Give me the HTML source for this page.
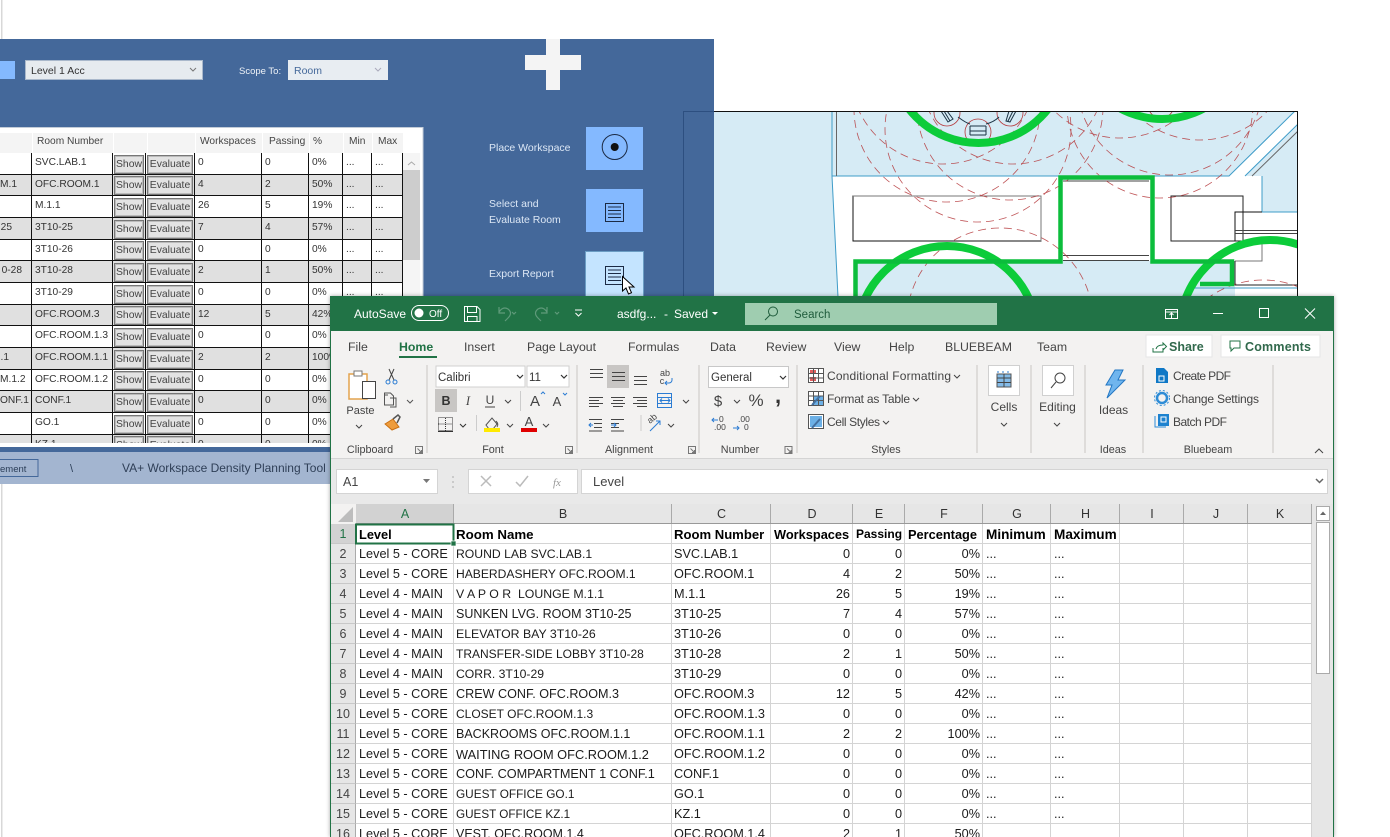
<!DOCTYPE html>
<html><head><meta charset="utf-8"><title>VA+ Workspace Density Planning Tool</title>
<style>
html,body{margin:0;padding:0;width:1390px;height:837px;overflow:hidden;background:#fff;font-family:"Liberation Sans",sans-serif}
svg{position:absolute;left:0;top:0}
svg text{font-family:"Liberation Sans",sans-serif}
table{border-collapse:separate;border-spacing:0;table-layout:fixed;position:absolute}
td{box-sizing:border-box;padding:0;white-space:nowrap;overflow:hidden}
#lt{left:0;top:153px;width:403px;font-size:10.2px;color:#333}
#lt td{border-right:1px solid #111;border-bottom:1px solid #111;padding-left:3px;padding-bottom:2px}
#lt td.r{text-align:right;padding-left:0}
#lt td.b{padding:0;text-align:center}
#lt tr.g td{background:#e0e0e0}
#lt tr.w td{background:#fff}
#lt tr.a td{height:22px}
#lt tr.c td{height:21px}
#lt td.b span{display:block;box-sizing:border-box;margin:1px 1px 0;height:19px;border:1px solid #777;outline:1px solid #bbb;outline-offset:-2px;background:#e3e3e3;line-height:18px;color:#444;font-size:10.4px}
#hd{position:absolute;left:0;top:133px;height:20px;font-size:10.2px;color:#444;background:#f4f4f4;width:403px}
#hd span{position:absolute;top:3px}
#hd i{position:absolute;top:0;height:20px;width:1px;background:#fff}
#xl{position:absolute;left:330px;top:296px;width:1004px;height:541px;background:#f3f2f1;box-shadow:0 0 4px rgba(0,0,0,.35);overflow:hidden}
#gd{left:1px;top:228px;width:981px;font-size:12.7px;color:#1c1c1c}
#gd td{height:20px;border-right:1px solid #d4d4d4;border-bottom:1px solid #d4d4d4;background:#fff;padding:2px 2px 0 3px;line-height:17px}
#gd td:nth-child(3),#gd td:nth-child(4){padding-left:2px}
#gd td.n{background:#e6e6e6;text-align:center;color:#444;padding:2px 0 0;border-right:1px solid #aaa;border-bottom:1px solid #c8c8c8;font-size:12.5px}
#gd td.s{background:#d2d2d2;color:#217346!important}
#gd td.r{text-align:right}
#gd tr.h td{font-weight:bold;color:#000;font-size:12.8px}
#ch{position:absolute;left:26px;top:208px;height:20px;width:956px;background:#e6e6e6;border-bottom:1px solid #999;box-sizing:border-box;font-size:12.5px;color:#333}
#ch span{position:absolute;top:0;height:19px;line-height:21px;text-align:center;border-right:1px solid #aaa;box-sizing:border-box;padding-left:1px}
</style></head><body>

<svg width="1390" height="837" viewBox="0 0 1390 837">
<rect x="1" y="0" width="1.5" height="837" fill="#d8d8d8"/>
<rect x="0" y="39" width="714" height="411" fill="#44689a"/>
<rect x="0" y="61" width="15" height="18" fill="#84b9ff"/>
<rect x="25.500" y="60.500" width="177" height="19" fill="#e6ebef" stroke="#a9b8cb"/>
<text x="31" y="74" font-size="10.500" fill="#333">Level 1 Acc</text>
<path d="M190 68l3 3 3-3" fill="none" stroke="#777"/>
<text x="239" y="74" font-size="9.500" fill="#eef2f7">Scope To:</text>
<rect x="288" y="60" width="100" height="20" fill="#e8edf2"/>
<text x="294" y="74" font-size="10.500" fill="#44689a">Room</text>
<path d="M375 68l3 3 3-3" fill="none" stroke="#aab"/>
<rect x="546" y="39" width="14" height="51" fill="#f4f4f4"/>
<rect x="525" y="55" width="56" height="15" fill="#f4f4f4"/>
<g font-size="10.500" fill="#dce7f5">
<text x="489" y="151">Place Workspace</text>
<text x="489" y="207">Select and</text>
<text x="489" y="223">Evaluate Room</text>
<text x="489" y="277">Export Report</text>
</g>
<rect x="586" y="127" width="57" height="43" fill="#84b9ff"/>
<circle cx="614.700" cy="147" r="12.500" fill="none" stroke="#1b2a44"/>
<circle cx="614.700" cy="147" r="4" fill="#111"/>
<rect x="586" y="189" width="57" height="43" fill="#84b9ff"/>
<g fill="none" stroke="#1b2a44">
<rect x="605.500" y="203.500" width="18" height="18"/>
<path d="M608 207h13M608 210.500h13M608 214h13M608 217.500h13"/>
</g>
<rect x="585.500" y="251.500" width="58" height="46" fill="#c4e4ff" stroke="#6b9dc4"/>
<g fill="none" stroke="#1b2a44">
<rect x="605.500" y="266.500" width="18" height="18"/>
<path d="M608 270h13M608 273.500h13M608 277h13M608 280.500h13"/>
</g>

<!-- plan -->
<path d="M683.500 297V111.500H714" fill="none" stroke="#2d4f80"/>
<rect x="714" y="111" width="584" height="186" fill="#d6ebf5"/>
<path d="M832 176H1229L1295 111H1298V124L1245 176H1262V212H1298V297H1235V261H855V297H838Z" fill="#fff"/>
<clipPath id="pc"><rect x="714" y="111" width="584" height="186"/></clipPath>
<g clip-path="url(#pc)">
<path d="M832 111V176M832 176H1229L1295 111M1245 176L1298 124M1262 176V212H1298M832 176L838 297" fill="none" stroke="#3f9cc8" stroke-width="1"/>
<path d="M836.500 111V176M1252 176L1298 131" fill="none" stroke="#666" stroke-width="1"/>
<path d="M853 241H1041V196H853Z" fill="none" stroke="#111"/>
<path d="M853 196H1041V241" fill="none" stroke="#777"/>
<path d="M1171 241V196H1243V241H1171Z" fill="none" stroke="#222"/>
<path d="M1235 241V212H1262" fill="none" stroke="#111"/>
<path d="M1235 230.500H1298M1235 233.500H1298" fill="none" stroke="#444"/>
<path d="M1262 240V261H1235" fill="none" stroke="#777"/>
<path d="M1235 261V285H1298" fill="none" stroke="#222"/>
<path d="M1193 288H1298" fill="none" stroke="#3f9cc8"/>
<path d="M1063 181H1149M1063 255.500H1149M1063 260.500H1149" fill="none" stroke="#444"/>
<g fill="none" stroke="#b5373a" stroke-width=".8" stroke-dasharray="8 5" opacity=".85">
<circle cx="943" cy="71" r="93"/><circle cx="1013" cy="71" r="93"/><circle cx="947" cy="109" r="93"/>
<circle cx="1010" cy="107" r="93"/><circle cx="978" cy="129" r="93"/><circle cx="1000" cy="321" r="93"/>
<circle cx="1160" cy="105" r="93"/><circle cx="1170" cy="82" r="93"/><circle cx="1120" cy="45" r="93"/>
<circle cx="1200" cy="47" r="93"/><circle cx="1263" cy="373" r="93"/>
</g>
<g fill="none" stroke="#b5373a" stroke-width=".8">
<circle cx="978" cy="132" r="13"/><circle cx="947" cy="113" r="13"/><circle cx="1010" cy="113" r="13"/><circle cx="1161" cy="105" r="13"/>
</g>
<g fill="none" stroke="#1b3344" stroke-width="1">
<path d="M970 126h16M970 131h16M970 135h16M970 126v9M986 126v9"/>
<path d="M941 111l7 11 5-3-6-8M944 111l6 10"/>
<path d="M1009 111l-3 10 4 1 6-11M1013 111l-5 10"/>
<path d="M958 117q8 6 12 7M986 124q8-2 13-7"/>
</g>
<g fill="none" stroke="#0ccc3a" stroke-width="8">
<circle cx="978.500" cy="55" r="88"/><circle cx="1162" cy="31" r="88"/>
<circle cx="947" cy="336" r="90"/><circle cx="1270" cy="330" r="90"/>
</g>
<path d="M855.500 297V261.500H1060.500V177.500H1152.500V261.500H1232V284H1200" fill="none" stroke="#0cbd3c" stroke-width="4.500"/>
</g>
<path d="M714 111.500H1297.500V297" fill="none" stroke="#111"/>
<path d="M622.500 276.500V291l3.500-3 2.500 6 3-1.300-2.500-5.700H634Z" fill="#fff" stroke="#000" stroke-width="1"/>

<!-- left table frame -->
<rect x="-2" y="127.500" width="425" height="320" fill="#fff" stroke="#c3ccd8"/>
<rect x="403" y="153" width="17" height="287" fill="#f5f5f5"/>
<rect x="403" y="170" width="17" height="90" fill="#cdcdcd"/>
<path d="M408 165l3.500-3 3.500 3" fill="none" stroke="#aaa"/>
<rect x="0" y="447" width="330" height="5" fill="#44689a"/>
<rect x="0" y="452" width="330" height="32" fill="#a3b5d0"/>
<rect x="-20" y="459.500" width="58" height="17" fill="#a3b5d0" stroke="#44689a"/>
<text x="0" y="472" font-size="9.500" fill="#2b3e58">ement</text>
<text x="70" y="472" font-size="11" fill="#2b3e58">\</text>
<text x="122" y="472" font-size="12" fill="#2f3f57">VA+ Workspace Density Planning Tool</text>
</svg>

<div id="hd">
<i style="left:32px"></i><i style="left:113px"></i><i style="left:147px"></i><i style="left:195px"></i><i style="left:262px"></i><i style="left:309px"></i><i style="left:343px"></i><i style="left:372px"></i>
<span style="left:37px">Room Number</span><span style="left:200px">Workspaces</span><span style="left:269px">Passing</span><span style="left:313px">%</span><span style="left:349px">Min</span><span style="left:378px">Max</span>
</div>

<div style="position:absolute;left:0;top:153px;width:403px;height:290px;overflow:hidden">
<table id="lt" style="top:0">
<colgroup><col style="width:32px"><col style="width:81px"><col style="width:33px"><col style="width:49px"><col style="width:67px"><col style="width:47px"><col style="width:34px"><col style="width:29px"><col style="width:31px"></colgroup>
<tr class="w a"><td></td><td>SVC.LAB.1</td><td class="b"><span>Show</span></td><td class="b"><span>Evaluate</span></td><td>0</td><td>0</td><td>0%</td><td>...</td><td>...</td></tr>
<tr class="g c"><td class="r" style="padding-right:16px">M.1</td><td>OFC.ROOM.1</td><td class="b"><span>Show</span></td><td class="b"><span>Evaluate</span></td><td>4</td><td>2</td><td>50%</td><td>...</td><td>...</td></tr>
<tr class="w a"><td></td><td>M.1.1</td><td class="b"><span>Show</span></td><td class="b"><span>Evaluate</span></td><td>26</td><td>5</td><td>19%</td><td>...</td><td>...</td></tr>
<tr class="g a"><td class="r" style="padding-right:19px">25</td><td>3T10-25</td><td class="b"><span>Show</span></td><td class="b"><span>Evaluate</span></td><td>7</td><td>4</td><td>57%</td><td>...</td><td>...</td></tr>
<tr class="w c"><td></td><td>3T10-26</td><td class="b"><span>Show</span></td><td class="b"><span>Evaluate</span></td><td>0</td><td>0</td><td>0%</td><td>...</td><td>...</td></tr>
<tr class="g a"><td class="r" style="padding-right:9px">0-28</td><td>3T10-28</td><td class="b"><span>Show</span></td><td class="b"><span>Evaluate</span></td><td>2</td><td>1</td><td>50%</td><td>...</td><td>...</td></tr>
<tr class="w a"><td></td><td>3T10-29</td><td class="b"><span>Show</span></td><td class="b"><span>Evaluate</span></td><td>0</td><td>0</td><td>0%</td><td>...</td><td>...</td></tr>
<tr class="g c"><td></td><td>OFC.ROOM.3</td><td class="b"><span>Show</span></td><td class="b"><span>Evaluate</span></td><td>12</td><td>5</td><td>42%</td><td>...</td><td>...</td></tr>
<tr class="w a"><td></td><td>OFC.ROOM.1.3</td><td class="b"><span>Show</span></td><td class="b"><span>Evaluate</span></td><td>0</td><td>0</td><td>0%</td><td>...</td><td>...</td></tr>
<tr class="g a"><td class="r" style="padding-right:22px">.1</td><td>OFC.ROOM.1.1</td><td class="b"><span>Show</span></td><td class="b"><span>Evaluate</span></td><td>2</td><td>2</td><td>100%</td><td>...</td><td>...</td></tr>
<tr class="w c"><td class="r" style="padding-right:6px">M.1.2</td><td>OFC.ROOM.1.2</td><td class="b"><span>Show</span></td><td class="b"><span>Evaluate</span></td><td>0</td><td>0</td><td>0%</td><td>...</td><td>...</td></tr>
<tr class="g a"><td class="r" style="padding-right:5px">ONF.1</td><td>CONF.1</td><td class="b"><span>Show</span></td><td class="b"><span>Evaluate</span></td><td>0</td><td>0</td><td>0%</td><td>...</td><td>...</td></tr>
<tr class="w a"><td></td><td>GO.1</td><td class="b"><span>Show</span></td><td class="b"><span>Evaluate</span></td><td>0</td><td>0</td><td>0%</td><td>...</td><td>...</td></tr>
<tr class="g c"><td></td><td>KZ.1</td><td class="b"><span>Show</span></td><td class="b"><span>Evaluate</span></td><td>0</td><td>0</td><td>0%</td><td>...</td><td>...</td></tr>
</table>
</div>

<div id="xl">
<div style="position:absolute;left:0;top:0;width:1004px;height:35px;background:#217346"></div>
<div style="position:absolute;left:0;top:162px;width:1004px;height:46px;background:#e9e9e9;border-top:1px solid #d4d4d4;box-sizing:border-box"></div>
<div id="ch">
<span style="left:0;width:98px;background:#d2d2d2;color:#217346">A</span><span style="left:98px;width:218px">B</span><span style="left:316px;width:99px">C</span><span style="left:415px;width:82px">D</span><span style="left:497px;width:52px">E</span><span style="left:549px;width:78px">F</span><span style="left:627px;width:68px">G</span><span style="left:695px;width:69px">H</span><span style="left:764px;width:64px">I</span><span style="left:828px;width:64px">J</span><span style="left:892px;width:64px">K</span>
</div>
<table id="gd">
<colgroup><col style="width:25px"><col style="width:98px"><col style="width:218px"><col style="width:99px"><col style="width:82px"><col style="width:52px"><col style="width:78px"><col style="width:68px"><col style="width:69px"><col style="width:64px"><col style="width:64px"><col style="width:64px"></colgroup>
<tr class="h"><td class="n s" style="font-weight:normal;font-size:12.5px">1</td><td>Level</td><td style="font-size:13.3px">Room Name</td><td style="font-size:13.1px">Room Number</td><td>Workspaces</td><td style="font-size:12px">Passing</td><td>Percentage</td><td style="font-size:13.6px">Minimum</td><td style="font-size:13.6px">Maximum</td><td></td><td></td><td></td></tr>
<tr><td class="n">2</td><td>Level 5 - CORE</td><td style="font-size:12.2px">ROUND LAB SVC.LAB.1</td><td>SVC.LAB.1</td><td class="r">0</td><td class="r">0</td><td class="r">0%</td><td>...</td><td>...</td><td></td><td></td><td></td></tr>
<tr><td class="n">3</td><td>Level 5 - CORE</td><td style="font-size:12.1px">HABERDASHERY OFC.ROOM.1</td><td>OFC.ROOM.1</td><td class="r">4</td><td class="r">2</td><td class="r">50%</td><td>...</td><td>...</td><td></td><td></td><td></td></tr>
<tr><td class="n">4</td><td>Level 4 - MAIN</td><td style="font-size:12.3px">V A P O R &nbsp;LOUNGE M.1.1</td><td>M.1.1</td><td class="r">26</td><td class="r">5</td><td class="r">19%</td><td>...</td><td>...</td><td></td><td></td><td></td></tr>
<tr><td class="n">5</td><td>Level 4 - MAIN</td><td style="font-size:12.5px">SUNKEN LVG. ROOM 3T10-25</td><td>3T10-25</td><td class="r">7</td><td class="r">4</td><td class="r">57%</td><td>...</td><td>...</td><td></td><td></td><td></td></tr>
<tr><td class="n">6</td><td>Level 4 - MAIN</td><td style="font-size:12.3px">ELEVATOR BAY 3T10-26</td><td>3T10-26</td><td class="r">0</td><td class="r">0</td><td class="r">0%</td><td>...</td><td>...</td><td></td><td></td><td></td></tr>
<tr><td class="n">7</td><td>Level 4 - MAIN</td><td style="font-size:12px">TRANSFER-SIDE LOBBY 3T10-28</td><td>3T10-28</td><td class="r">2</td><td class="r">1</td><td class="r">50%</td><td>...</td><td>...</td><td></td><td></td><td></td></tr>
<tr><td class="n">8</td><td>Level 4 - MAIN</td><td style="font-size:12.2px">CORR. 3T10-29</td><td>3T10-29</td><td class="r">0</td><td class="r">0</td><td class="r">0%</td><td>...</td><td>...</td><td></td><td></td><td></td></tr>
<tr><td class="n">9</td><td>Level 5 - CORE</td><td style="font-size:12.6px">CREW CONF. OFC.ROOM.3</td><td>OFC.ROOM.3</td><td class="r">12</td><td class="r">5</td><td class="r">42%</td><td>...</td><td>...</td><td></td><td></td><td></td></tr>
<tr><td class="n">10</td><td>Level 5 - CORE</td><td style="font-size:12px">CLOSET OFC.ROOM.1.3</td><td>OFC.ROOM.1.3</td><td class="r">0</td><td class="r">0</td><td class="r">0%</td><td>...</td><td>...</td><td></td><td></td><td></td></tr>
<tr><td class="n">11</td><td>Level 5 - CORE</td><td style="font-size:12.5px">BACKROOMS OFC.ROOM.1.1</td><td>OFC.ROOM.1.1</td><td class="r">2</td><td class="r">2</td><td class="r">100%</td><td>...</td><td>...</td><td></td><td></td><td></td></tr>
<tr><td class="n">12</td><td>Level 5 - CORE</td><td style="font-size:12.8px">WAITING ROOM OFC.ROOM.1.2</td><td>OFC.ROOM.1.2</td><td class="r">0</td><td class="r">0</td><td class="r">0%</td><td>...</td><td>...</td><td></td><td></td><td></td></tr>
<tr><td class="n">13</td><td>Level 5 - CORE</td><td style="font-size:12.7px">CONF. COMPARTMENT 1 CONF.1</td><td>CONF.1</td><td class="r">0</td><td class="r">0</td><td class="r">0%</td><td>...</td><td>...</td><td></td><td></td><td></td></tr>
<tr><td class="n">14</td><td>Level 5 - CORE</td><td style="font-size:11.8px">GUEST OFFICE GO.1</td><td>GO.1</td><td class="r">0</td><td class="r">0</td><td class="r">0%</td><td>...</td><td>...</td><td></td><td></td><td></td></tr>
<tr><td class="n">15</td><td>Level 5 - CORE</td><td style="font-size:11.7px">GUEST OFFICE KZ.1</td><td>KZ.1</td><td class="r">0</td><td class="r">0</td><td class="r">0%</td><td>...</td><td>...</td><td></td><td></td><td></td></tr>
<tr><td class="n">16</td><td>Level 5 - CORE</td><td style="font-size:12.5px">VEST. OFC.ROOM.1.4</td><td>OFC.ROOM.1.4</td><td class="r">2</td><td class="r">1</td><td class="r">50%</td><td></td><td></td><td></td><td></td><td></td></tr>
</table>
<div style="position:absolute;left:0;top:0;width:1px;height:541px;background:#217346"></div>
<div style="position:absolute;right:0;top:0;width:1px;height:541px;background:#217346"></div>
</div>

<svg width="1390" height="837" viewBox="0 0 1390 837">
<!-- title bar -->
<text x="354" y="318" font-size="12" fill="#fff">AutoSave</text>
<rect x="411.500" y="305.500" width="37" height="15" rx="7.500" fill="none" stroke="#fff"/>
<circle cx="419" cy="313" r="4.500" fill="#fff"/>
<text x="429" y="317" font-size="10" fill="#fff">Off</text>
<g fill="none" stroke="#fff">
<path d="M464.500 306.500H477L480 309.500V321.500H464.500Z"/>
<path d="M467.500 306.500V312.500H476.500V306.500M467.500 321.500V316.500H477V321.500"/>
</g>
<g fill="none" stroke="#5f9a7a" stroke-width="1.200">
<path d="M499 307V313H505M499 312q4-6 9-3q5 4 0 9l-3 3"/>
<path d="M512 312l2 2 2-2"/>
<path d="M547 307V313H541M547 312q-4-6-9-3q-5 4 0 9l3 3"/>
<path d="M555 312l2 2 2-2"/>
</g>
<path d="M575 310h7M575.500 313l3 3 3-3" fill="none" stroke="#fff"/>
<text x="617" y="318" font-size="12" fill="#fff">asdfg...</text>
<text x="664" y="318" font-size="12" fill="#fff">-</text>
<text x="674" y="318" font-size="12" fill="#fff">Saved</text>
<path d="M712 312h6l-3 3z" fill="#fff"/>
<rect x="745" y="303" width="252" height="22" fill="#9fcdb0"/>
<circle cx="773" cy="311.500" r="4.500" fill="none" stroke="#1f5c3c"/>
<path d="M770 315l-5 5" stroke="#1f5c3c" fill="none"/>
<text x="794" y="318" font-size="11.500" fill="#1f5c3c">Search</text>
<g fill="none" stroke="#fff">
<rect x="1165.500" y="309.500" width="12" height="9"/><path d="M1165.500 312H1177.500M1171.500 318V313.500M1169.500 315l2-2 2 2"/>
<path d="M1213 313.500H1223"/>
<rect x="1259.500" y="308.500" width="9" height="9"/>
<path d="M1305 308.500l10 10M1315 308.500l-10 10"/>
</g>
<!-- tabs -->
<g font-size="12.300" fill="#444">
<text x="348" y="351">File</text>
<text x="399" y="351" font-weight="bold" fill="#217346">Home</text>
<text x="464" y="351">Insert</text>
<text x="527" y="351">Page Layout</text>
<text x="628" y="351">Formulas</text>
<text x="710" y="351">Data</text>
<text x="766" y="351">Review</text>
<text x="834" y="351">View</text>
<text x="889" y="351">Help</text>
<text x="945" y="351">BLUEBEAM</text>
<text x="1037" y="351">Team</text>
</g>
<rect x="399" y="356" width="38" height="2" fill="#217346"/>
<rect x="1146" y="335" width="66" height="22" fill="#fff" stroke="#e6e6e6"/>
<rect x="1221" y="335" width="99" height="22" fill="#fff" stroke="#e6e6e6"/>
<path d="M1153 348v4h10v-3M1156 349q1-4 7-4v-2l3.500 3.500-3.500 3.500v-2" fill="none" stroke="#217346"/>
<text x="1169" y="351" font-size="12.500" font-weight="bold" fill="#31694c">Share</text>
<path d="M1230 341h10v7h-6l-3 3v-3h-1z" fill="none" stroke="#217346"/>
<text x="1245" y="351" font-size="12.500" font-weight="bold" fill="#31694c" textLength="66">Comments</text>
<!-- separators -->
<path d="M427 365V453M577 365V453M699 365V453M797 365V453M977 365V453M1031 365V453M1085 365V453M1143 365V453M1273 365V453" stroke="#c8c6c4" fill="none"/>
<path d="M331 458.500H1333" stroke="#d4d4d4" fill="none"/>
<g font-size="10.800" fill="#444" text-anchor="middle">
<text x="370" y="453">Clipboard</text>
<text x="493" y="453">Font</text>
<text x="629" y="453">Alignment</text>
<text x="740" y="453">Number</text>
<text x="886" y="453">Styles</text>
<text x="1113" y="453">Ideas</text>
<text x="1208" y="453">Bluebeam</text>
</g>
<g fill="none" stroke="#777">
<path d="M415.500 446.500h7v7h-7zM417.500 448.500l4 4M419 452.500h2.500V450"/>
<path d="M565.500 446.500h7v7h-7zM567.500 448.500l4 4M569 452.500h2.500V450"/>
<path d="M688.500 446.500h7v7h-7zM690.500 448.500l4 4M692 452.500h2.500V450"/>
<path d="M785.500 446.500h7v7h-7zM787.500 448.500l4 4M789 452.500h2.500V450" transform="translate(-.5 0)"/>
<path d="M1315 453l4-4 4 4" stroke="#444"/>
</g>
<!-- clipboard -->
<path d="M349 374h18v25h-18z" fill="#fff" stroke="#e3a34e" stroke-width="1.500"/>
<rect x="354" y="371" width="8" height="5" fill="#fff" stroke="#777"/>
<rect x="362.500" y="381.500" width="13" height="17" fill="#fff" stroke="#444"/>
<text x="360.500" y="414" font-size="11" fill="#444" text-anchor="middle">Paste</text>
<path d="M356 425l3 3 3-3" fill="none" stroke="#444"/>
<g fill="none" stroke="#444"><path d="M389 369l5 11M394 369l-5 11"/><circle cx="388" cy="382" r="2" stroke="#2b7cd3"/><circle cx="395" cy="382" r="2" stroke="#2b7cd3"/></g>
<g fill="none" stroke="#555"><path d="M384.500 393h6l3 3v9h-9zM388 395h-3.500"/><path d="M390 398h6v9h-6" stroke="#555"/><path d="M407 400l3 3 3-3"/></g>
<path d="M385 424l8-5 6 8-7 3z" fill="#ee9c3c" stroke="#c96f12"/><path d="M393 419l5-4 2 2-3 6" fill="none" stroke="#555" stroke-width="1.500"/>
<!-- font -->
<rect x="436" y="366" width="89" height="21" fill="#fff" stroke="#d0d0d0"/>
<rect x="527" y="366" width="42" height="21" fill="#fff" stroke="#d0d0d0"/>
<text x="438" y="381" font-size="11.500" fill="#333">Calibri</text>
<text x="529" y="381" font-size="11.500" fill="#333">11</text>
<path d="M517 375l3 3 3-3M561 375l3 3 3-3" fill="none" stroke="#333" stroke-width="1.200"/>
<rect x="435" y="389" width="22" height="23" fill="#c8c6c4"/>
<text x="446" y="405" font-size="12.500" font-weight="bold" fill="#333" text-anchor="middle">B</text>
<text x="468" y="405" font-size="12.500" font-style="italic" style="font-family:'Liberation Serif',serif" fill="#444" text-anchor="middle">I</text>
<text x="490" y="404" font-size="12" fill="#444" text-anchor="middle">U</text><path d="M485 407h10" stroke="#444"/>
<path d="M505 400l3 3 3-3" fill="none" stroke="#444"/>
<path d="M520.500 391V411" stroke="#ccc"/>
<text x="535" y="406" font-size="15" fill="#444" text-anchor="middle">A</text><path d="M541 394l2-2 2 2" fill="none" stroke="#2b7cd3"/>
<text x="557" y="406" font-size="13" fill="#444" text-anchor="middle">A</text><path d="M563 393l2 2 2-2" fill="none" stroke="#2b7cd3"/>
<g fill="none" stroke="#333"><rect x="438.500" y="417.500" width="14" height="13" stroke-dasharray="1 1"/><path d="M438 431.500h15" stroke-width="1"/><path d="M445.500 418v13M438.500 424h14" stroke-dasharray="1 1"/><path d="M460 424l3 3 3-3"/></g>
<path d="M476.500 415v16" stroke="#ccc" fill="none"/>
<path d="M486 425l6-7 5 6-4 5h-4zM496 421q3 3 1 6" fill="none" stroke="#555"/>
<rect x="484" y="428" width="16" height="4" fill="#ffea00"/>
<path d="M507 424l3 3 3-3" fill="none" stroke="#444"/>
<text x="529" y="426" font-size="13" fill="#444" text-anchor="middle">A</text>
<rect x="521" y="428" width="16" height="4" fill="#e00000"/>
<path d="M543 424l3 3 3-3" fill="none" stroke="#444"/>
<!-- alignment -->
<rect x="607" y="365" width="22" height="23" fill="#c8c6c4"/>
<g stroke="#444" fill="none">
<path d="M590 369.500h13M590 373.500h13M590 377.500h13"/>
<path d="M612 372.500h13M612 376.500h13M612 380.500h13"/>
<path d="M634 376.500h13M634 380.500h13M634 384.500h13"/>
<path d="M589 397.500h14M589 400.500h10M589 403.500h14M589 406.500h10"/>
<path d="M611 397.500h14M613 400.500h10M611 403.500h14M613 406.500h10"/>
<path d="M633 397.500h14M637 400.500h10M633 403.500h14M637 406.500h10"/>
<path d="M589 419.500h13M594 423.500h8M594 427.500h8M589 431h13"/>
<path d="M611 419.500h13M611 423.500h8M611 427.500h8M611 431h13"/>
<path d="M683 400l3 3 3-3M668 424l3 3 3-3"/>
</g>
<path d="M589 425h4M591 423l-2 2 2 2M611 425h5M614 423l2 2-2 2" fill="none" stroke="#2b7cd3"/>
<text x="665" y="376" font-size="9" fill="#444" text-anchor="middle">ab</text>
<text x="662" y="384" font-size="9" fill="#444" text-anchor="middle">c</text>
<path d="M672 378v2a3 3 0 0 1-3 3h-4M667 381l-2 2 2 2" fill="none" stroke="#2b7cd3"/>
<rect x="657.500" y="393.500" width="14" height="14" fill="none" stroke="#2b7cd3"/>
<path d="M658 397.500h14M658 403.500h14M660 400.500h10M662 398.500l-2 2 2 2M668 398.500l2 2-2 2" fill="none" stroke="#2b7cd3"/>
<path d="M641 415v16" stroke="#ccc" fill="none"/>
<text x="650" y="424" font-size="9" fill="#444" transform="rotate(-40 650 424)">ab</text>
<path d="M650 431l10-10M656 421h4v4" fill="none" stroke="#2b7cd3"/>
<!-- number -->
<rect x="708.500" y="366.500" width="80" height="21" fill="#fff" stroke="#c8c8c8"/>
<text x="711" y="381" font-size="11.500" fill="#333">General</text>
<path d="M780 376l3 3 3-3" fill="none" stroke="#333" stroke-width="1.200"/>
<text x="718" y="406" font-size="15" fill="#444" text-anchor="middle">$</text>
<path d="M734 400l3 3 3-3" fill="none" stroke="#444"/>
<text x="756" y="406" font-size="17" fill="#444" text-anchor="middle">%</text>
<text x="778" y="403" font-size="22" font-weight="bold" fill="#333" text-anchor="middle">,</text>
<g font-size="8.500" fill="#444">
<text x="719" y="422">0</text><text x="714" y="430">.00</text>
<text x="738" y="422">.00</text><text x="744" y="430">0</text>
</g>
<path d="M712 420h6M714 418l-2 2 2 2M733 428h6M737 426l2 2-2 2" fill="none" stroke="#2b7cd3"/>
<!-- styles -->
<g fill="none" stroke="#555">
<rect x="808.500" y="368.500" width="15" height="14" fill="#fff"/><rect x="810" y="370" width="6" height="4" fill="#e15f5f" stroke="none"/><rect x="810" y="377" width="6" height="4" fill="#e15f5f" stroke="none"/><path d="M808.500 373.500h15M808.500 378h15M813.500 368.500v14M818.500 368.500v14"/>
<rect x="808.500" y="391.500" width="15" height="14" fill="#fff"/><rect x="813" y="396" width="10" height="9" fill="#6cb0e6" stroke="none"/><path d="M808.500 396h15M808.500 400.500h15M813.500 391.500v14M818.500 391.500v14"/>
<rect x="808.500" y="414.500" width="15" height="14" fill="#fff"/><rect x="810" y="416" width="12" height="11" fill="#6cb0e6" stroke="none"/>
</g>
<path d="M812 405l8-9M812 428l8-9" stroke="#4470a0" stroke-width="2" fill="none"/>
<g font-size="12" fill="#444">
<text x="827" y="380" textLength="124">Conditional Formatting</text>
<text x="827" y="403" textLength="83">Format as Table</text>
<text x="827" y="426" textLength="53">Cell Styles</text>
</g>
<path d="M954 375l3 3 3-3M913 398l3 3 3-3M883 421l3 3 3-3" fill="none" stroke="#444"/>
<!-- cells editing ideas -->
<rect x="988.500" y="365.500" width="31" height="30" fill="#fff" stroke="#d0d0d0"/>
<rect x="997" y="374" width="14" height="13" fill="#84bbe8" stroke="#555"/><path d="M997 378h14M997 382.500h14M1004 374v13" stroke="#444" fill="none"/><path d="M997 372h14" stroke="#2b7cd3" stroke-dasharray="2 3"/>
<text x="1004" y="411" font-size="12" fill="#444" text-anchor="middle">Cells</text>
<path d="M1001 423l3 3 3-3" fill="none" stroke="#444"/>
<rect x="1042.500" y="365.500" width="31" height="30" fill="#fff" stroke="#d0d0d0"/>
<circle cx="1060" cy="378" r="5" fill="none" stroke="#444"/><path d="M1056 382l-5 6" stroke="#444" fill="none"/>
<text x="1057.500" y="411" font-size="12" fill="#444" text-anchor="middle">Editing</text>
<path d="M1054 423l3 3 3-3" fill="none" stroke="#444"/>
<path d="M1115 370h8l-5 10h7l-18 18 5-13h-6z" fill="#6fb5ee" stroke="#2276c3"/>
<text x="1113.500" y="414" font-size="12" fill="#444" text-anchor="middle">Ideas</text>
<!-- bluebeam -->
<path d="M1156 368h8l4 4v11h-12z" fill="#0f78c6"/><rect x="1159" y="376" width="5" height="5" fill="none" stroke="#fff"/>
<circle cx="1162" cy="398" r="5" fill="none" stroke="#2e8cd6" stroke-width="2.500"/><circle cx="1162" cy="398" r="7.500" fill="none" stroke="#2e8cd6" stroke-dasharray="2 2"/>
<path d="M1155 416v11h11" fill="none" stroke="#2e8cd6"/><rect x="1158" y="414" width="11" height="12" fill="#1d82cf"/><rect x="1161" y="417" width="5" height="5" fill="none" stroke="#fff"/>
<g font-size="12" fill="#444">
<text x="1173" y="380" textLength="58">Create PDF</text>
<text x="1173" y="403" textLength="86">Change Settings</text>
<text x="1173" y="426" textLength="54">Batch PDF</text>
</g>
<!-- formula bar -->
<rect x="336.500" y="469.500" width="101" height="24" fill="#fff" stroke="#d4d4d4"/>
<text x="343" y="486" font-size="12.500" fill="#444">A1</text>
<path d="M423 479h7l-3.500 4z" fill="#777"/>
<path d="M453 476v2M453 481v2M453 486v2" stroke="#aaa" fill="none"/>
<rect x="468.500" y="469.500" width="109" height="24" fill="#fff" stroke="#d4d4d4"/>
<path d="M481 476l10 10M491 476l-10 10" stroke="#bbb" stroke-width="1.500" fill="none"/>
<path d="M516 482l4 4 8-10" stroke="#bbb" stroke-width="1.500" fill="none"/>
<text x="553" y="486" font-size="11" font-style="italic" style="font-family:'Liberation Serif',serif" fill="#999">fx</text>
<rect x="581.500" y="469.500" width="746" height="24" fill="#fff" stroke="#d4d4d4"/>
<text x="593" y="486" font-size="13" fill="#444">Level</text>
<path d="M1316 479l3.500 3.500 3.500-3.500" stroke="#666" stroke-width="1.500" fill="none"/>
<!-- corner -->
<path d="M353 507v15h-15z" fill="#bdbdbd"/>
<!-- selection -->
<rect x="356" y="524.500" width="97.500" height="19" fill="none" stroke="#217346" stroke-width="2"/>
<rect x="451" y="541" width="5" height="5" fill="#217346" stroke="#fff" stroke-width=".7"/>
<!-- scrollbar -->
<rect x="1312" y="504" width="21" height="333" fill="#e6e6e6"/>
<rect x="1316.500" y="506.500" width="13" height="14" fill="#fff" stroke="#aaa"/>
<path d="M1320 515l3-3.500 3 3.500z" fill="#666"/>
<rect x="1316.500" y="522.500" width="13" height="151" fill="#fff" stroke="#aaa"/>
</svg>
</body></html>
